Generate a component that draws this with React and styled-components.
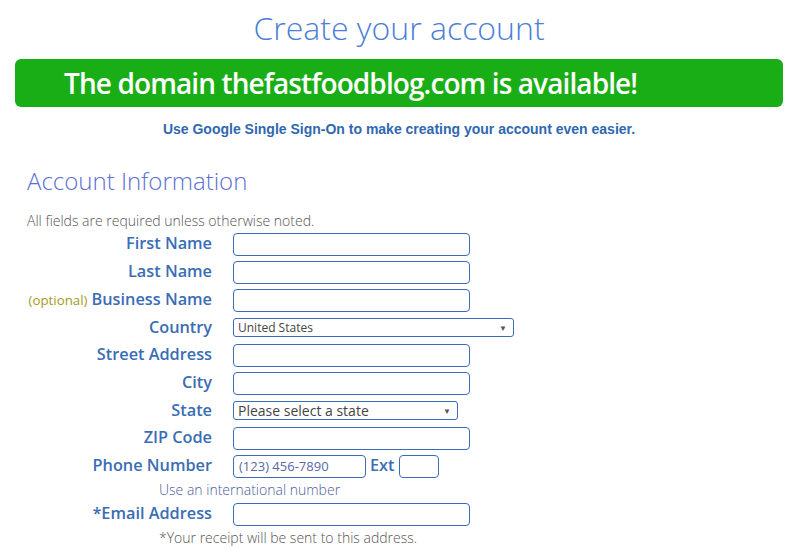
import styled, { createGlobalStyle } from 'styled-components'

const GlobalStyle = createGlobalStyle`
  body {
    margin: 0;
    background: #fff;
    font-family: 'Open Sans', sans-serif;
  }
`

const Page = styled.div`
  width: 792px;
  padding: 0 9px 0 15px;
  box-sizing: border-box;
`

const Title = styled.h1`
  margin: 0;
  padding-top: 6px;
  height: 53px;
  text-align: center;
  font-size: 32px;
  font-weight: 300;
  color: #4c7ed6;
  line-height: 44px;
`

const Banner = styled.div`
  height: 48px;
  background: #19ae15;
  border-radius: 6px;
  padding-left: 49px;
  display: flex;
  align-items: center;
  color: #fff;
  font-size: 28px;
  font-weight: 600;
  letter-spacing: -0.9px;
`

const SsoNote = styled.div`
  margin-top: 14px;
  text-align: center;
  font-family: 'Liberation Sans', Arial, sans-serif;
  font-weight: 700;
  font-size: 14px;
  line-height: 16px;
  color: #2f68b0;
`

const Section = styled.div`
  padding-left: 12px;
  margin-top: 28px;
`

const SectionTitle = styled.h2`
  margin: 0;
  font-size: 24px;
  font-weight: 300;
  color: #5c70d6;
  line-height: 32px;
`

const Hint = styled.div`
  margin-top: 15px;
  font-size: 14px;
  font-weight: 300;
  color: #555;
  line-height: 18px;
`

const Form = styled.div`
  display: grid;
  grid-template-columns: 185px auto;
  column-gap: 21px;
  align-items: center;
  margin-left: -12px;
  padding-left: 12px;
`

const Label = styled.label`
  grid-column: 1;
  justify-self: end;
  font-size: 16.3px;
  font-weight: 600;
  color: #3a6db5;
  white-space: nowrap;
  line-height: 26px;
  align-self: start;
`

const Optional = styled.span`
  color: #a39c1c;
  font-size: 13.3px;
  font-weight: 400;
  margin-right: 4px;
`

const Field = styled.div`
  grid-column: 2;
  display: flex;
  align-items: center;
  gap: 4px;
  height: ${(p) => p.$h || 28}px;
`

const Input = styled.input`
  box-sizing: border-box;
  width: ${(p) => p.$w || 237}px;
  height: 23px;
  border: 1px solid #3a6db5;
  border-radius: 4px;
  padding: 0 5px;
  font-family: 'Open Sans', sans-serif;
  font-size: 13px;
  color: #555;
  &::placeholder {
    color: #5868a6;
  }
`

const Select = styled.div`
  box-sizing: border-box;
  width: ${(p) => p.$w}px;
  height: ${(p) => p.$h}px;
  border: 1px solid #3a6db5;
  border-radius: 3px;
  padding: 0 6px 0 4px;
  display: flex;
  align-items: center;
  justify-content: space-between;
  font-size: ${(p) => p.$fs}px;
  color: #444;
  &::after {
    content: '▼';
    font-size: 8px;
    color: #555;
  }
`

const ExtLabel = styled.span`
  font-size: 16.3px;
  font-weight: 600;
  color: #3a6db5;
  margin-bottom: 2px;
`

const Note = styled.div`
  grid-column: 1 / span 2;
  padding-left: 132px;
  font-size: 14px;
  font-weight: 300;
  color: ${(p) => p.$color || '#555'};
  line-height: 20px;
`

const TextRow = ({ label, optional }) => (
  <>
    <Label>
      {optional && <Optional>(optional)</Optional>}
      {label}
    </Label>
    <Field>
      <Input />
    </Field>
  </>
)

export default function App() {
  return (
    <Page>
      <GlobalStyle />
      <Title>Create your account</Title>
      <Banner>The domain thefastfoodblog.com is available!</Banner>
      <SsoNote>Use Google Single Sign-On to make creating your account even easier.</SsoNote>
      <Section>
        <SectionTitle>Account Information</SectionTitle>
        <Hint>All fields are required unless otherwise noted.</Hint>
        <Form>
          <TextRow label="First Name" />
          <TextRow label="Last Name" />
          <TextRow label="Business Name" optional />
          <Label>Country</Label>
          <Field $h={27}>
            <Select $w={281} $h={19} $fs={12}>United States</Select>
          </Field>
          <TextRow label="Street Address" />
          <TextRow label="City" />
          <Label>State</Label>
          <Field $h={27}>
            <Select $w={225} $h={19} $fs={14}>Please select a state</Select>
          </Field>
          <TextRow label="ZIP Code" />
          <Label>Phone Number</Label>
          <Field>
            <Input $w={133} placeholder="(123) 456-7890" />
            <ExtLabel>Ext</ExtLabel>
            <Input $w={40} />
          </Field>
          <Note $color="#4f5c9c">Use an international number</Note>
          <TextRow label="*Email Address" />
          <Note>*Your receipt will be sent to this address.</Note>
        </Form>
      </Section>
    </Page>
  )
}
